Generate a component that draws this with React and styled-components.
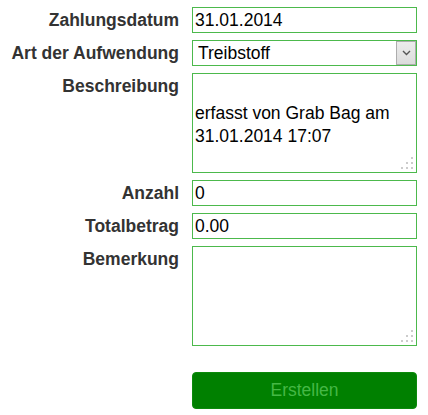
import React from "react";
import styled, { createGlobalStyle } from "styled-components";

const GlobalStyle = createGlobalStyle`
  body {
    margin: 0;
    background: #ffffff;
    font-family: "Liberation Sans", Arial, sans-serif;
  }
`;

const Form = styled.form`
  display: grid;
  grid-template-columns: 179px 225px;
  column-gap: 13px;
  row-gap: 7px;
  padding-top: 7px;
`;

const Label = styled.label`
  align-self: start;
  text-align: right;
  font-size: 17.5px;
  font-weight: bold;
  line-height: 26px;
  color: #333333;
  white-space: nowrap;
`;

const fieldBase = `
  box-sizing: border-box;
  width: 225px;
  margin: 0;
  border: 1px solid #4cb94c;
  border-radius: 0;
  background: #ffffff;
  color: #000000;
  font-family: "Liberation Sans", Arial, sans-serif;
  font-size: 17.5px;
  outline: none;
`;

const Input = styled.input`
  ${fieldBase}
  height: 26px;
  padding: 0 2px;
`;

const SelectWrap = styled.div`
  position: relative;
  width: 225px;
  height: 26px;
`;

const Select = styled.select`
  ${fieldBase}
  height: 26px;
  padding: 0 24px 0 5px;
  appearance: none;
  -webkit-appearance: none;
`;

const ArrowBox = styled.span`
  position: absolute;
  top: 1px;
  right: 1px;
  bottom: 1px;
  width: 20px;
  box-sizing: border-box;
  display: flex;
  align-items: center;
  justify-content: center;
  border: 1px solid #adadad;
  background: linear-gradient(#ececec, #dcdcdc);
  pointer-events: none;
`;

const AreaWrap = styled.div`
  position: relative;
  width: 225px;
  height: 100px;
`;

const TextArea = styled.textarea`
  ${fieldBase}
  display: block;
  height: 100px;
  padding: 4px 2px;
  line-height: 23.5px;
  resize: none;
`;

const Grip = styled.svg`
  position: absolute;
  right: 3px;
  bottom: 3px;
  pointer-events: none;
`;

const ButtonCell = styled.div`
  grid-column: 2;
  margin-top: 19px;
`;

const Button = styled.button`
  box-sizing: border-box;
  width: 225px;
  height: 37px;
  border: 1px solid #0c8a0c;
  border-radius: 4px;
  background: #008000;
  color: #45b845;
  font-family: "Liberation Sans", Arial, sans-serif;
  font-size: 17.5px;
  cursor: default;
`;

const ResizeGrip = () => (
  <Grip width="13" height="13" viewBox="0 0 13 13">
    <g fill="#cccccc">
      <rect x="10" y="0" width="2" height="2" />
      <rect x="5" y="5" width="2" height="2" />
      <rect x="10" y="5" width="2" height="2" />
      <rect x="0" y="10" width="2" height="2" />
      <rect x="5" y="10" width="2" height="2" />
      <rect x="10" y="10" width="2" height="2" />
    </g>
  </Grip>
);

const App = () => (
  <>
    <GlobalStyle />
    <Form onSubmit={(e) => e.preventDefault()}>
      <Label>Zahlungsdatum</Label>
      <Input defaultValue="31.01.2014" />

      <Label>Art der Aufwendung</Label>
      <SelectWrap>
        <Select defaultValue="Treibstoff">
          <option>Treibstoff</option>
          <option>Verpflegung</option>
          <option>Unterkunft</option>
        </Select>
        <ArrowBox>
          <svg width="9" height="6" viewBox="0 0 9 6">
            <path d="M1 1 L4.5 4.5 L8 1" fill="none" stroke="#555555" strokeWidth="1.4" />
          </svg>
        </ArrowBox>
      </SelectWrap>

      <Label>Beschreibung</Label>
      <AreaWrap>
        <TextArea defaultValue={"\nerfasst von Grab Bag am\n31.01.2014 17:07"} />
        <ResizeGrip />
      </AreaWrap>

      <Label>Anzahl</Label>
      <Input defaultValue="0" />

      <Label>Totalbetrag</Label>
      <Input defaultValue="0.00" />

      <Label>Bemerkung</Label>
      <AreaWrap>
        <TextArea defaultValue="" />
        <ResizeGrip />
      </AreaWrap>

      <ButtonCell>
        <Button type="submit">Erstellen</Button>
      </ButtonCell>
    </Form>
  </>
);

export default App;
